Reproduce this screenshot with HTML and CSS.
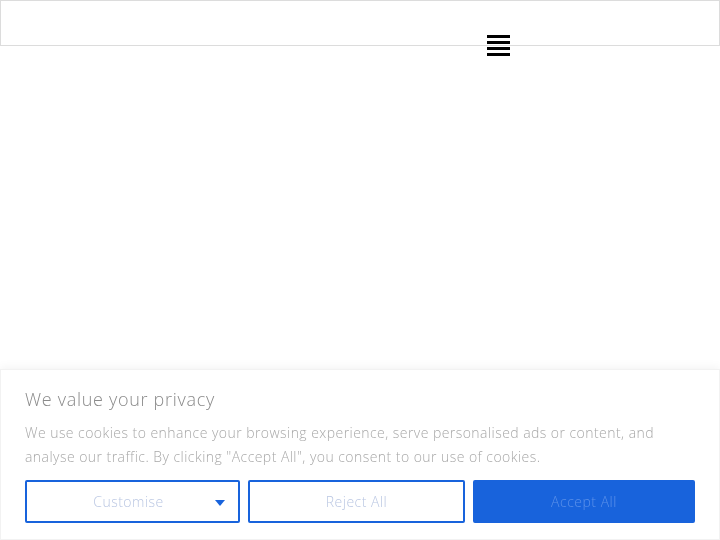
FILE: index.html
```html
<!DOCTYPE html>
<html lang="en">
<head>
<meta charset="utf-8">
<title>Page</title>
<link rel="stylesheet" href="styles.css">
</head>
<body>
<header class="site-header">
  <div class="menu-toggle" aria-label="Menu">
    <span class="bar"></span><span class="bar"></span><span class="bar"></span><span class="bar"></span>
  </div>
</header>
<main class="content"></main>
<section class="cookie-banner">
  <h2 class="cookie-title">We value your privacy</h2>
  <p class="cookie-text">We use cookies to enhance your browsing experience, serve personalised ads or content, and analyse our traffic. By clicking "Accept All", you consent to our use of cookies.</p>
  <div class="cookie-actions">
    <button class="btn btn-outline btn-customise">Customise <span class="caret"></span></button>
    <button class="btn btn-outline">Reject All</button>
    <button class="btn btn-primary">Accept All</button>
  </div>
</section>
</body>
</html>
```
FILE: styles.css
```css
* { box-sizing: border-box; }
html, body { margin: 0; padding: 0; background: #fff; }
body { font-family: "Open Sans", "Liberation Sans", sans-serif; font-weight: 300; }

.site-header {
  height: 46px;
  border: 1px solid #dcdcdc;
  position: relative;
  z-index: 5;
}
.menu-toggle {
  position: absolute;
  left: 486px;
  top: 34px;
  width: 23px;
  display: flex;
  flex-direction: column;
  gap: 3px;
  cursor: pointer;
}
.bar {
  display: block;
  height: 3px;
  background: #000;
}

.content {
  display: block;
  min-height: 494px;
}

.cookie-banner {
  position: fixed;
  left: 0; right: 0; bottom: 0;
  height: 171px;
  background: #fff;
  border: 1px solid #f2f2f2;
  box-shadow: 0 -1px 10px rgba(0,0,0,0.06);
  padding: 17px 24px 16px 24px;
  z-index: 2;
}
.cookie-title {
  margin: 0 0 10px;
  font-size: 18px;
  line-height: 24px;
  font-weight: 300;
  letter-spacing: 0.7px;
  color: #8a8a8a;
}
.cookie-text {
  margin: 0 0 11px;
  font-size: 14px;
  line-height: 24px;
  letter-spacing: 0.45px;
  color: #a8a8a8;
}
.cookie-actions {
  display: grid;
  grid-template-columns: 215fr 217fr 222fr;
  gap: 8px;
}
.btn {
  height: 43px;
  border-radius: 2px;
  font-family: inherit;
  font-weight: 300;
  font-size: 14px;
  letter-spacing: 0.5px;
  position: relative;
}
.btn-outline {
  background: #fff;
  border: 2px solid #1863dc;
  color: #b9c6e2;
}
.btn-customise { padding-right: 14px; }
.btn-primary {
  background: #1863dc;
  border: 2px solid #1863dc;
  color: #5d92ea;
}
.caret {
  position: absolute;
  right: 13px;
  top: 18px;
  width: 0; height: 0;
  border-left: 5px solid transparent;
  border-right: 5px solid transparent;
  border-top: 6px solid #1863dc;
}
```
